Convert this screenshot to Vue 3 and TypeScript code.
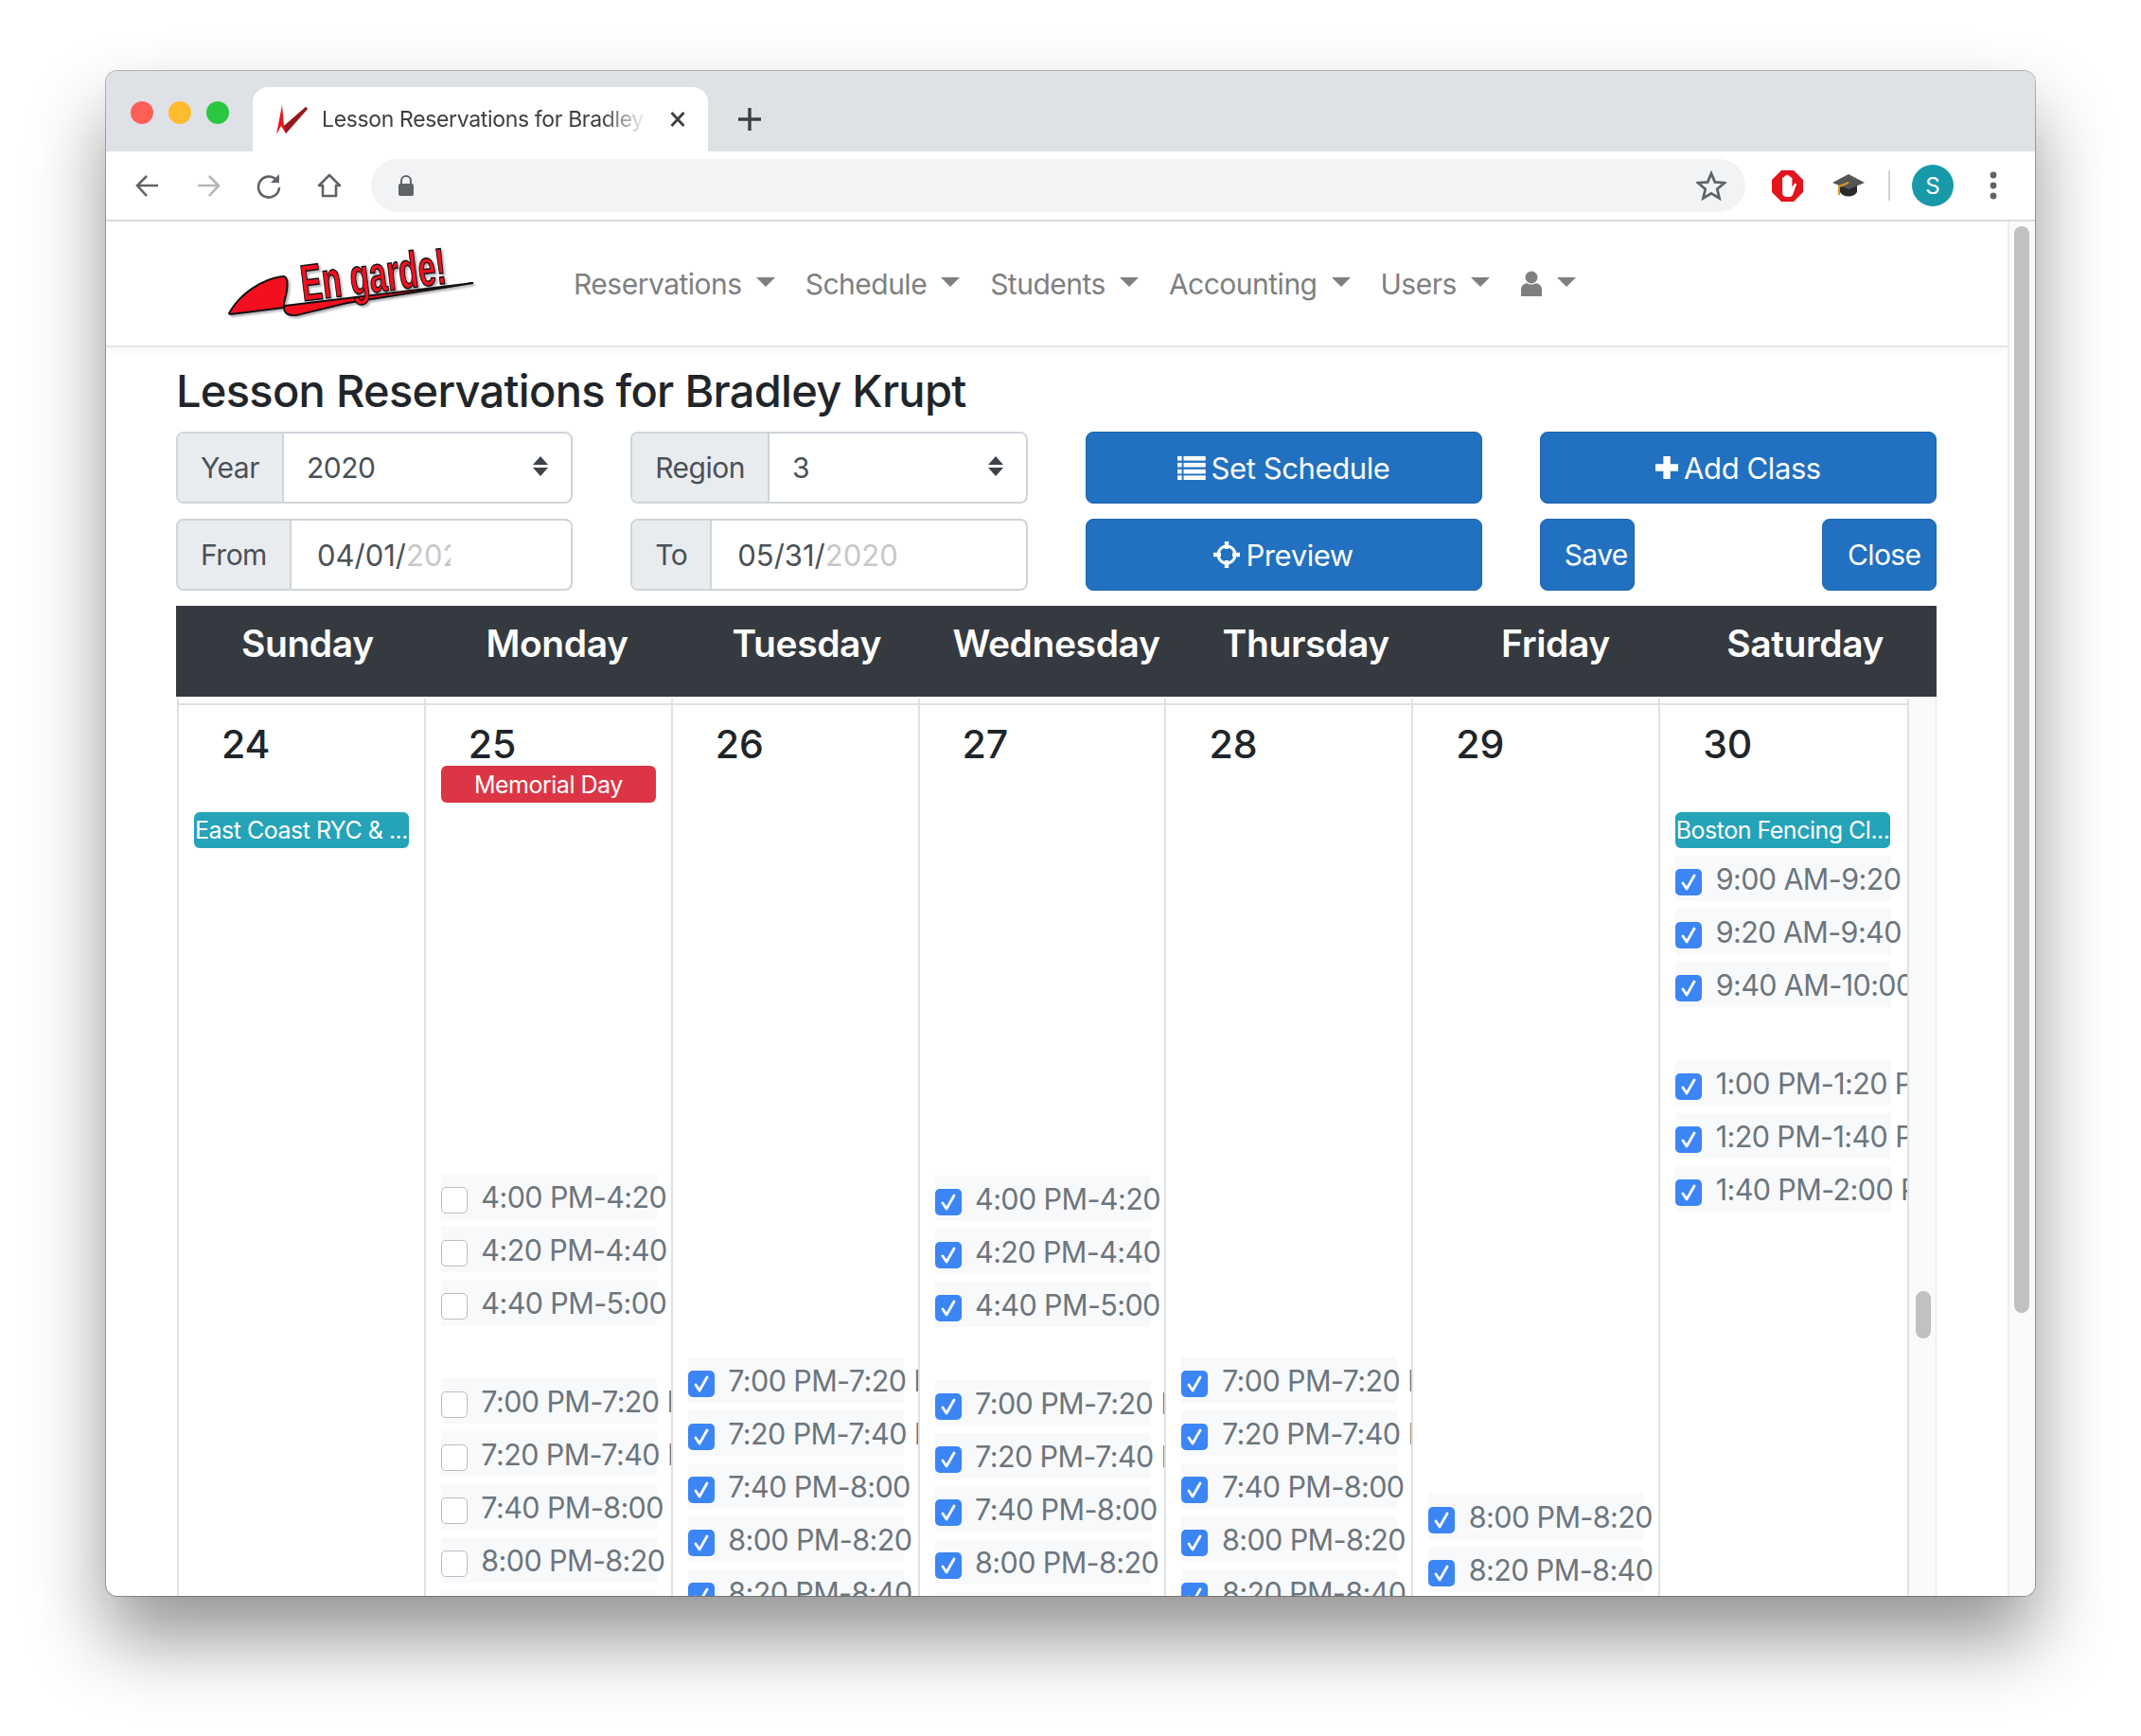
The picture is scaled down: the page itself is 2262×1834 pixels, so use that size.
<script setup lang="ts">
interface Group { gap: number; times: string[] }
interface Day { num: number; event?: string; kind?: string; on: boolean; groups: Group[] }

const navItems = ['Reservations', 'Schedule', 'Students', 'Accounting', 'Users']
const weekDays = ['Sunday', 'Monday', 'Tuesday', 'Wednesday', 'Thursday', 'Friday', 'Saturday']

const evening = ['7:00 PM-7:20 PM', '7:20 PM-7:40 PM', '7:40 PM-8:00 PM', '8:00 PM-8:20 PM', '8:20 PM-8:40 PM']
const afternoon = ['4:00 PM-4:20 PM', '4:20 PM-4:40 PM', '4:40 PM-5:00 PM']

const days: Day[] = [
  { num: 24, event: 'East Coast RYC & ...', kind: 'teal', on: false, groups: [] },
  { num: 25, event: 'Memorial Day', kind: 'red', on: false, groups: [
    { gap: 392, times: afternoon },
    { gap: 56, times: evening },
  ] },
  { num: 26, on: true, groups: [{ gap: 586, times: evening }] },
  { num: 27, on: true, groups: [
    { gap: 394, times: afternoon },
    { gap: 56, times: evening },
  ] },
  { num: 28, on: true, groups: [{ gap: 586, times: evening }] },
  { num: 29, on: true, groups: [{ gap: 730, times: ['8:00 PM-8:20 PM', '8:20 PM-8:40 PM'] }] },
  { num: 30, event: 'Boston Fencing Cl...', kind: 'teal', on: true, groups: [
    { gap: 8, times: ['9:00 AM-9:20 AM', '9:20 AM-9:40 AM', '9:40 AM-10:00 AM'] },
    { gap: 56, times: ['1:00 PM-1:20 PM', '1:20 PM-1:40 PM', '1:40 PM-2:00 PM'] },
  ] },
]
</script>

<template>
  <div class="page">
    <div class="window">
      <div class="tabstrip">
        <div class="lights">
          <span class="light red"></span>
          <span class="light amber"></span>
          <span class="light green"></span>
        </div>
        <div class="tab">
          <svg class="favicon" viewBox="0 0 34 34">
            <path d="M1 33 L7 2 L9 24 L32 4 L34 6 L11 32 L6 24 Z" fill="#e8141c" />
            <path d="M9 24 L32 4 L34 6 L11 32 Z" fill="#7a1a1c" opacity=".75" />
          </svg>
          <span class="tab-title">Lesson Reservations for Bradley</span>
          <svg class="tab-x" viewBox="0 0 16 16"><path d="M1.500 1 L14.500 15 M14.500 1 L1.500 15" stroke="#3c4043" stroke-width="2.800" /></svg>
        </div>
        <svg class="new-tab" viewBox="0 0 24 24"><path d="M12 0 V24 M0 12 H24" stroke="#3c4043" stroke-width="3.400" /></svg>
      </div>

      <div class="toolbar">
        <svg class="tool" viewBox="0 0 28 28"><path d="M25 14 H4 M13 4 L3 14 L13 25" fill="none" stroke="#5f6368" stroke-width="2.600" /></svg>
        <svg class="tool" viewBox="0 0 28 28"><path d="M3 14 H24 M15 4 L25 14 L15 25" fill="none" stroke="#b4b6b9" stroke-width="2.600" /></svg>
        <svg class="tool" viewBox="0 0 28 28"><path d="M22 8 A11 11 0 1 0 25 16" fill="none" stroke="#5f6368" stroke-width="2.600" /><path d="M25 2 V11 H16 Z" fill="#5f6368" /></svg>
        <svg class="tool" viewBox="0 0 28 28"><path d="M14 3 L3 14 H7 V25 H21 V14 H25 Z" fill="none" stroke="#5f6368" stroke-width="2.600" stroke-linejoin="round" /></svg>
        <div class="omnibox">
          <svg class="lock" viewBox="0 0 18 24"><path d="M4 11 V7 A5 5 0 0 1 14 7 V11" fill="none" stroke="#5f6368" stroke-width="2" /><rect x="1" y="10" width="16" height="13" rx="2" fill="#5f6368" /></svg>
          <svg class="star" viewBox="0 0 30 30"><path d="M15 3 L18.600 11.600 L28 12.400 L20.900 18.500 L23 27.600 L15 22.800 L7 27.600 L9.100 18.500 L2 12.400 L11.400 11.600 Z" fill="none" stroke="#5f6368" stroke-width="2.600" /></svg>
        </div>
        <svg class="adblock" viewBox="0 0 33 33">
          <path d="M10 0 H23 L33 10 V23 L23 33 H10 L0 23 V10 Z" fill="#e2141c" />
          <path transform="translate(2.500 3) scale(.86)" d="M10 6 a1.200 1.200 0 0 1 2.400 0 V4 a1.200 1.200 0 0 1 2.400 0 V3 a1.200 1.200 0 0 1 2.400 0 V4 a1.200 1.200 0 0 1 2.400 0 V6 a1.200 1.200 0 0 1 2.400 0 V17 L25 13 a1.200 1.200 0 0 1 2.200 1 L23 26 a4 4 0 0 1 -4 3 H15 a5 5 0 0 1 -5 -5 Z" fill="#fff" />
        </svg>
        <svg class="cap" viewBox="0 0 34 30">
          <path d="M8 13 V22 C12 28 22 28 26 22 V13 Z" fill="#2a2a2a" />
          <path d="M17 3 L34 12 L17 19 L0 12 Z" fill="#555" />
          <path d="M17 12 L7 16 V25" fill="none" stroke="#d99a1c" stroke-width="2" />
        </svg>
        <span class="sep"></span>
        <span class="avatar">S</span>
        <svg class="dots" viewBox="0 0 8 30"><circle cx="4" cy="4" r="3.400" /><circle cx="4" cy="15" r="3.400" /><circle cx="4" cy="26" r="3.400" /></svg>
      </div>

      <div class="viewport">
        <div class="app">
          <nav class="navbar">
            <svg class="logo" viewBox="0 0 262 74">
              <path d="M1 68 C12 48 35 32 57 29 C63 28 63 36 62 44 C61 52 58 56 59 62 L2 69 Z" fill="#f40f1e" stroke="#111" stroke-width="2" />
              <path d="M60 60 L259 36 L126 57 L72 70 C64 71 59 68 59 62 Z" fill="#f40f1e" stroke="#111" stroke-width="1.800" />
              <g transform="translate(79 55) rotate(-7) scale(0.62 1)">
                <text class="logo-text" x="0" y="0">En garde!</text>
              </g>
            </svg>
            <a v-for="item in navItems" :key="item" class="nav-link">{{ item }}<span class="caret"></span></a>
            <a class="nav-link">
              <svg class="user" viewBox="0 0 24 28"><circle cx="12" cy="7" r="6.500" /><path d="M1 27 V20 C1 15 5 14 7 13 C10 15 14 15 17 13 C19 14 23 15 23 20 V27 Z" /></svg>
              <span class="caret small"></span>
            </a>
          </nav>

          <main class="content">
            <h4 class="title">Lesson Reservations for Bradley Krupt</h4>
            <div class="controls">
              <div class="input-group">
                <span class="addon">Year</span>
                <div class="field select"><span>2020</span><span class="updown"></span></div>
              </div>
              <div class="input-group">
                <span class="addon">Region</span>
                <div class="field select"><span>3</span><span class="updown"></span></div>
              </div>
              <button class="btn">
                <svg class="btn-icon" viewBox="0 0 32 28" fill="#fff"><rect x="0" y="1" width="5" height="5" /><rect x="7" y="1" width="25" height="5" /><rect x="0" y="8.500" width="5" height="5" /><rect x="7" y="8.500" width="25" height="5" /><rect x="0" y="16" width="5" height="5" /><rect x="7" y="16" width="25" height="5" /><rect x="0" y="23" width="5" height="5" /><rect x="7" y="23" width="25" height="5" /></svg>
                Set Schedule
              </button>
              <button class="btn">
                <svg class="btn-icon" viewBox="0 0 26 28" fill="#fff"><path d="M9 1 h8 v9 h9 v8 h-9 v9 h-8 v-9 h-9 v-8 h9 z" /></svg>
                Add Class
              </button>

              <div class="input-group">
                <span class="addon">From</span>
                <div class="field date"><span class="clip">04/01/<i>2020</i></span></div>
              </div>
              <div class="input-group">
                <span class="addon">To</span>
                <div class="field date"><span>05/31/<i>2020</i></span></div>
              </div>
              <button class="btn">
                <svg class="btn-icon target" viewBox="0 0 28 28"><circle cx="14" cy="14" r="9" fill="none" stroke="#fff" stroke-width="3" /><path d="M14 0 V8 M14 20 V28 M0 14 H8 M20 14 H28" stroke="#fff" stroke-width="4.400" /></svg>
                Preview
              </button>
              <div class="save-close">
                <button class="btn save">Save</button>
                <button class="btn close">Close</button>
              </div>
            </div>

            <div class="week-head">
              <div v-for="name in weekDays" :key="name" class="week-name">{{ name }}</div>
            </div>

            <div class="calendar">
              <div class="cal-days">
                <div v-for="day in days" :key="day.num" class="day">
                  <div class="day-num">{{ day.num }}</div>
                  <div class="badge-row" :class="{ 'badge-low': day.kind === 'teal' }">
                    <span v-if="day.event" class="badge" :class="day.kind">{{ day.event }}</span>
                  </div>
                  <div
                    v-for="group in day.groups"
                    :key="group.times[0]"
                    class="group"
                    :style="{ marginTop: group.gap + 'px' }"
                  >
                    <label v-for="time in group.times" :key="time" class="slot">
                      <span class="check" :class="{ on: day.on }">
                        <svg v-if="day.on" viewBox="0 0 28 28"><path d="M8 15 L12 21 L20 7" fill="none" stroke="#fff" stroke-width="2.800" stroke-linecap="round" stroke-linejoin="round" /></svg>
                      </span>
                      <span class="time">{{ time }}</span>
                    </label>
                  </div>
                </div>
              </div>
              <div class="cal-scroll"><span class="cal-thumb"></span></div>
            </div>
          </main>
        </div>
        <div class="page-scroll"><span class="page-thumb"></span></div>
      </div>
    </div>
  </div>
</template>

<style>
html, body {
  margin: 0;
  background: #fff;
}
</style>

<style scoped>
.page {
  width: 2262px;
  height: 1834px;
  box-sizing: border-box;
  padding: 75px 112px 148px 112px;
  background: #fff;
  overflow: hidden;
  font-family: Inter, "Liberation Sans", sans-serif;
  color: #212529;
}
.window {
  height: 100%;
  display: flex;
  flex-direction: column;
  border-radius: 12px;
  overflow: hidden;
  background: #fff;
  box-shadow: 0 0 0 1px rgba(0,0,0,.28), 0 46px 80px rgba(0,0,0,.42);
}

/* tab strip */
.tabstrip {
  height: 85px;
  flex: none;
  background: #dee1e6;
  display: flex;
  align-items: flex-end;
  position: relative;
}
.lights {
  display: flex;
  gap: 16px;
  padding: 0 0 29px 26px;
  width: 155px;
  box-sizing: border-box;
}
.light {
  width: 24px;
  height: 24px;
  border-radius: 50%;
}
.light.red { background: #fd5f57; }
.light.amber { background: #fdbb2e; }
.light.green { background: #2ac840; }
.tab {
  width: 481px;
  height: 68px;
  background: #fff;
  border-radius: 16px 16px 0 0;
  display: flex;
  align-items: center;
  box-sizing: border-box;
  padding-left: 24px;
}
.favicon {
  width: 34px;
  height: 34px;
  flex: none;
}
.tab-title {
  margin-left: 15px;
  width: 344px;
  font-size: 23px;
  white-space: nowrap;
  overflow: hidden;
  color: #3c4043;
  letter-spacing: -.35px;
  -webkit-mask-image: linear-gradient(90deg, #000 86%, transparent);
  mask-image: linear-gradient(90deg, #000 86%, transparent);
}
.tab-x {
  width: 16px;
  height: 16px;
  margin-left: 24px;
}
.new-tab {
  width: 24px;
  height: 24px;
  margin: 0 0 22px 32px;
}

/* toolbar */
.toolbar {
  height: 74px;
  flex: none;
  box-sizing: border-box;
  border-bottom: 2px solid #dadce0;
  display: flex;
  align-items: center;
  padding: 0 0 0 30px;
}
.tool {
  width: 28px;
  height: 28px;
  margin-right: 36px;
  flex: none;
}
.tool:nth-child(4) { margin-right: 30px; }
.omnibox {
  width: 1452px;
  height: 56px;
  border-radius: 28px;
  background: #f1f3f4;
  display: flex;
  align-items: center;
  justify-content: space-between;
  padding: 0 20px 0 28px;
  box-sizing: border-box;
}
.lock {
  width: 18px;
  height: 24px;
}
.star {
  width: 32px;
  height: 32px;
}
.adblock {
  width: 33px;
  height: 33px;
  margin-left: 28px;
  flex: none;
}
.cap {
  width: 34px;
  height: 30px;
  margin-left: 31px;
  flex: none;
}
.sep {
  width: 2px;
  height: 32px;
  background: #d0d2d5;
  margin-left: 25px;
  flex: none;
}
.avatar {
  width: 44px;
  height: 44px;
  border-radius: 50%;
  background: #1899a8;
  color: #fff;
  font-size: 24px;
  display: flex;
  align-items: center;
  justify-content: center;
  margin-left: 23px;
  flex: none;
}
.dots {
  width: 8px;
  height: 30px;
  margin-left: 38px;
  fill: #5f6368;
  flex: none;
}

/* page */
.viewport {
  flex: 1;
  min-height: 0;
  display: flex;
}
.app {
  width: 2009px;
  flex: none;
  overflow: hidden;
}
.navbar {
  height: 133px;
  box-sizing: border-box;
  display: flex;
  align-items: center;
  border-bottom: 2px solid #e4e6e9;
  box-shadow: 0 4px 10px rgba(0,0,0,.04);
  padding: 0 0 0 129px;
}
.logo {
  width: 262px;
  height: 74px;
  margin-right: 103px;
  flex: none;
  overflow: visible;
  filter: drop-shadow(2px 2px 1px rgba(80,70,90,.45));
}
.logo-text {
  font-family: "Liberation Sans", sans-serif;
  font-weight: 700;
  font-size: 54px;
  fill: #f40f1e;
  stroke: #111;
  stroke-width: 1.500px;
}
.nav-link {
  display: flex;
  align-items: center;
  font-size: 30px;
  letter-spacing: -.5px;
  color: #7f7f7f;
  margin-right: 32px;
}
.caret {
  width: 0;
  height: 0;
  margin-left: 15px;
  margin-bottom: 4px;
  border-left: 10px solid transparent;
  border-right: 10px solid transparent;
  border-top: 10px solid #7f7f7f;
}
.user {
  width: 24px;
  height: 28px;
  fill: #7f7f7f;
}
.content {
  padding: 0 75px 0 74px;
}
.title {
  margin: 0;
  height: 89px;
  line-height: 92px;
  font-size: 47px;
  font-weight: 500;
  letter-spacing: -.72px;
}
.controls {
  display: grid;
  grid-template-columns: repeat(4, 1fr);
  grid-auto-rows: 76px;
  column-gap: 61px;
  row-gap: 16px;
}
.input-group {
  display: flex;
  border: 2px solid #ced4da;
  border-radius: 8px;
  box-sizing: border-box;
  overflow: hidden;
  font-size: 30px;
  letter-spacing: -.5px;
  color: #495057;
}
.addon {
  background: #e9ecef;
  border-right: 2px solid #ced4da;
  padding: 0 24px;
  display: flex;
  align-items: center;
  flex: none;
}
.field {
  flex: 1;
  display: flex;
  align-items: center;
  position: relative;
  padding-left: 24px;
}
.field.date {
  padding-left: 27px;
  font-size: 31px;
  letter-spacing: 0;
}
.field i {
  font-style: normal;
  color: #c6c8ca;
}
.clip {
  display: block;
  width: 141px;
  overflow: hidden;
  white-space: nowrap;
}
.updown {
  position: absolute;
  right: 24px;
  top: 24px;
  width: 0;
  height: 0;
  border-left: 8px solid transparent;
  border-right: 8px solid transparent;
  border-bottom: 9px solid #3d4248;
}
.updown::after {
  content: '';
  position: absolute;
  left: -8px;
  top: 12px;
  border-left: 8px solid transparent;
  border-right: 8px solid transparent;
  border-top: 9px solid #3d4248;
}
.btn {
  border: 1px solid #1c65b0;
  border-radius: 8px;
  background: #2270c0;
  color: #fff;
  font: inherit;
  font-size: 31px;
  letter-spacing: -.4px;
  padding: 0;
  display: flex;
  align-items: center;
  justify-content: center;
  gap: 6px;
}
.btn-icon {
  height: 26px;
  width: auto;
}
.btn-icon.target {
  height: 28px;
}
.save-close {
  display: flex;
  justify-content: space-between;
}
.save {
  width: 100px;
  justify-content: flex-end;
  padding-right: 6px;
  font-size: 30px;
  letter-spacing: -.6px;
}
.close {
  width: 121px;
  justify-content: flex-start;
  padding-left: 26px;
  font-size: 30px;
  letter-spacing: -.6px;
}

/* calendar */
.week-head {
  margin-top: 16px;
  height: 96px;
  box-sizing: border-box;
  background: #343a40;
  color: #fff;
  padding: 0 7px;
  display: grid;
  grid-template-columns: repeat(7, 1fr);
}
.week-name {
  text-align: center;
  font-size: 39px;
  font-weight: 600;
  letter-spacing: -.4px;
  line-height: 80px;
}
.calendar {
  display: flex;
  height: 950px;
  overflow: hidden;
}
.cal-days {
  width: 1830px;
  flex: none;
  display: grid;
  grid-template-columns: repeat(7, 1fr);
  box-sizing: border-box;
  margin: 2px 0 0 1px;
  border-left: 2px solid #dee2e6;
  border-right: 2px solid #dee2e6;
}
.day {
  position: relative;
  overflow: hidden;
  min-width: 0;
  border-right: 2px solid #dee2e6;
  padding-left: 16px;
  box-sizing: border-box;
}
.day:last-child {
  border-right: 0;
}
.day::before {
  content: '';
  position: absolute;
  left: 0;
  right: 0;
  top: 5px;
  height: 2px;
  background: #dee2e6;
}
.day-num {
  font-size: 41px;
  font-weight: 500;
  line-height: 50px;
  padding: 23px 0 0 29px;
  height: 48px;
}
.badge-row {
  height: 39px;
}
.badge-row.badge-low {
  margin-top: 49px;
  height: 38px;
}
.badge {
  display: block;
  width: 227px;
  border-radius: 6px;
  color: #fff;
  font-size: 25px;
  letter-spacing: -.5px;
  text-align: center;
  white-space: nowrap;
  overflow: hidden;
}
.badge.red {
  background: #dc3545;
  height: 39px;
  line-height: 41px;
}
.badge.teal {
  background: #25a3b8;
  line-height: 38px;
}
.slot {
  display: flex;
  align-items: center;
  width: 228px;
  height: 48px;
  margin-bottom: 8px;
  background: #f8f9fa;
  white-space: nowrap;
}
.check {
  width: 28px;
  height: 28px;
  flex: none;
  box-sizing: border-box;
  border-radius: 5px;
  border: 1.500px solid #b9bcc0;
  background: #fff;
  margin-top: 8px;
}
.check.on {
  border: 0;
  background: #3b85f5;
}
.check svg {
  display: block;
}
.time {
  margin-left: 14.500px;
  font-size: 30.500px;
  letter-spacing: -.6px;
  color: #6c757d;
}
.cal-scroll {
  flex: 1;
  background: #fafafa;
  border-right: 1px solid #e6e6e6;
  position: relative;
}
.cal-thumb {
  position: absolute;
  top: 628px;
  left: 7px;
  width: 16px;
  height: 50px;
  border-radius: 8px;
  background: #c1c1c1;
}
.page-scroll {
  flex: 1;
  background: #fafafa;
  border-left: 2px solid #eeeeee;
  position: relative;
}
.page-thumb {
  position: absolute;
  top: 5px;
  left: 5px;
  width: 16px;
  height: 1148px;
  border-radius: 8px;
  background: #c1c1c1;
}
</style>
